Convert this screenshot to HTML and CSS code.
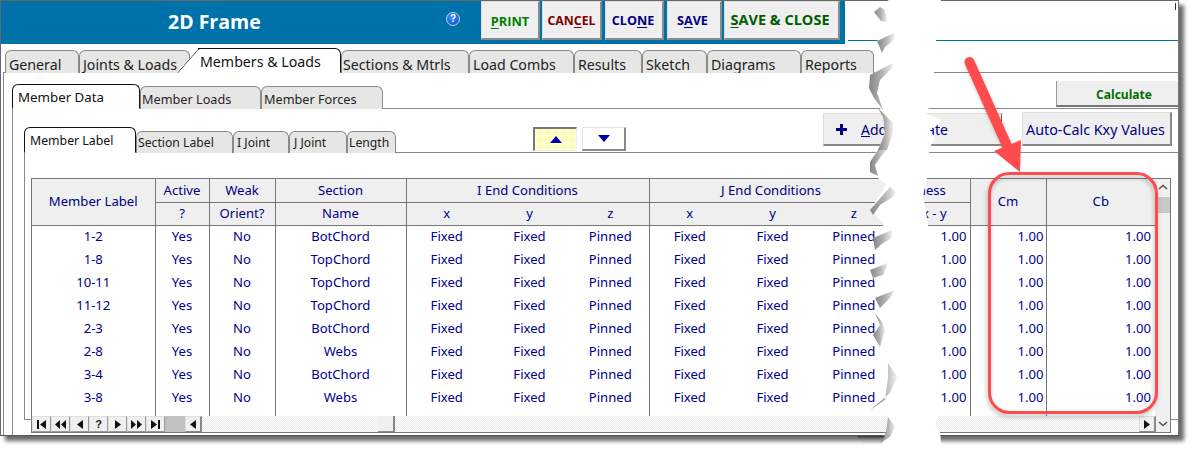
FILE: index.html
```html
<!DOCTYPE html>
<html lang="en">
<head>
<meta charset="utf-8">
<title>2D Frame</title>
<link rel="stylesheet" href="styles.css">
</head>
<body>
<div class="window">
  <header class="titlebar">
    <div class="bluebar">
      <h1 class="apptitle">2D Frame</h1>
      <span class="help">?</span>
      <div class="actions">
        <button class="act print"><u>P</u>RINT</button>
        <button class="act cancel">CAN<u>C</u>EL</button>
        <button class="act clone">CLO<u>N</u>E</button>
        <button class="act save">S<u>A</u>VE</button>
        <button class="act saveclose"><u>S</u>AVE &amp; CLOSE</button>
      </div>
    </div>
    <div class="titlerest"><span class="tick"></span></div>
  </header>

  <nav class="maintabs">
    <span class="tab m t-general">General</span>
    <span class="tab m t-joints">Joints &amp; Loads</span>
    <span class="tab m active t-members">Members &amp; Loads</span>
    <span class="tab m t-sections">Sections &amp; Mtrls</span>
    <span class="tab m t-combs">Load Combs</span>
    <span class="tab m t-results">Results</span>
    <span class="tab m t-sketch">Sketch</span>
    <span class="tab m t-diagrams">Diagrams</span>
    <span class="tab m t-reports">Reports</span>
  </nav>

  <section class="page1">
    <div class="subrow">
      <span class="tab s active t-mdata">Member Data</span>
      <span class="tab s t-mloads">Member Loads</span>
      <span class="tab s t-mforces">Member Forces</span>
      <button class="calc">Calculate</button>
    </div>

    <section class="page2">
      <div class="toolrow">
        <span class="tab k active t-mlabel">Member Label</span>
        <span class="tab k t-slabel">Section Label</span>
        <span class="tab k t-ijoint">I Joint</span>
        <span class="tab k t-jjoint">J Joint</span>
        <span class="tab k t-length">Length</span>
        <button class="sort up"><svg width="14" height="7" viewBox="0 0 14 7"><path d="M7 0L13 7H1Z" fill="#0000b0"/></svg></button>
        <button class="sort down"><svg width="14" height="7" viewBox="0 0 14 7"><path d="M1 0H13L7 7Z" fill="#0000b0"/></svg></button>
        <button class="tool add"><svg class="plus" width="11" height="11" viewBox="0 0 11 11"><path d="M4 0H7V4H11V7H7V11H4V7H0V4H4Z" fill="#000080"/></svg><span><u>A</u>dd / Update</span></button>
        <button class="tool auto">Auto-Calc Kxy Values</button>
      </div>

      <section class="page3">
        <div class="sheet">
          <div class="gridrow">
            <table class="grid">
              <colgroup>
                <col class="c1"><col class="c2"><col class="c3"><col class="c4">
                <col class="c5"><col class="c6"><col class="c7">
                <col class="c5"><col class="c6"><col class="c8">
                <col class="c9"><col class="c10"><col class="c11">
              </colgroup>
              <thead>
                <tr>
                  <th rowspan="2">Member Label</th><th>Active</th><th>Weak</th><th>Section</th>
                  <th colspan="3">I End Conditions</th><th colspan="3">J End Conditions</th>
                  <th class="kh1">Stiffness</th><th rowspan="2">Cm</th><th rowspan="2">Cb</th>
                </tr>
                <tr>
                  <th>?</th><th>Orient?</th><th>Name</th>
                  <th class="inner">x</th><th class="inner">y</th><th class="inner">z</th><th class="inner">x</th><th class="inner">y</th><th class="inner">z</th>
                  <th class="kh2">K x - y</th>
                </tr>
              </thead>
              <tbody>
                <tr><td class="e">1-2</td><td class="e">Yes</td><td class="e">No</td><td class="e">BotChord</td><td>Fixed</td><td>Fixed</td><td class="e">Pinned</td><td>Fixed</td><td>Fixed</td><td class="e">Pinned</td><td class="n e">1.00</td><td class="n e">1.00</td><td class="n">1.00</td></tr>
                <tr><td class="e">1-8</td><td class="e">Yes</td><td class="e">No</td><td class="e">TopChord</td><td>Fixed</td><td>Fixed</td><td class="e">Pinned</td><td>Fixed</td><td>Fixed</td><td class="e">Pinned</td><td class="n e">1.00</td><td class="n e">1.00</td><td class="n">1.00</td></tr>
                <tr><td class="e">10-11</td><td class="e">Yes</td><td class="e">No</td><td class="e">TopChord</td><td>Fixed</td><td>Fixed</td><td class="e">Pinned</td><td>Fixed</td><td>Fixed</td><td class="e">Pinned</td><td class="n e">1.00</td><td class="n e">1.00</td><td class="n">1.00</td></tr>
                <tr><td class="e">11-12</td><td class="e">Yes</td><td class="e">No</td><td class="e">TopChord</td><td>Fixed</td><td>Fixed</td><td class="e">Pinned</td><td>Fixed</td><td>Fixed</td><td class="e">Pinned</td><td class="n e">1.00</td><td class="n e">1.00</td><td class="n">1.00</td></tr>
                <tr><td class="e">2-3</td><td class="e">Yes</td><td class="e">No</td><td class="e">BotChord</td><td>Fixed</td><td>Fixed</td><td class="e">Pinned</td><td>Fixed</td><td>Fixed</td><td class="e">Pinned</td><td class="n e">1.00</td><td class="n e">1.00</td><td class="n">1.00</td></tr>
                <tr><td class="e">2-8</td><td class="e">Yes</td><td class="e">No</td><td class="e">Webs</td><td>Fixed</td><td>Fixed</td><td class="e">Pinned</td><td>Fixed</td><td>Fixed</td><td class="e">Pinned</td><td class="n e">1.00</td><td class="n e">1.00</td><td class="n">1.00</td></tr>
                <tr><td class="e">3-4</td><td class="e">Yes</td><td class="e">No</td><td class="e">BotChord</td><td>Fixed</td><td>Fixed</td><td class="e">Pinned</td><td>Fixed</td><td>Fixed</td><td class="e">Pinned</td><td class="n e">1.00</td><td class="n e">1.00</td><td class="n">1.00</td></tr>
                <tr><td class="e">3-8</td><td class="e">Yes</td><td class="e">No</td><td class="e">Webs</td><td>Fixed</td><td>Fixed</td><td class="e">Pinned</td><td>Fixed</td><td>Fixed</td><td class="e">Pinned</td><td class="n e">1.00</td><td class="n e">1.00</td><td class="n">1.00</td></tr>
                <tr class="filler"><td class="e"></td><td class="e"></td><td class="e"></td><td class="e"></td><td></td><td></td><td class="e"></td><td></td><td></td><td class="e"></td><td class="e"></td><td class="e"></td><td></td></tr>
              </tbody>
            </table>
            <div class="vscroll">
              <svg class="chev" width="10" height="6" viewBox="0 0 10 6"><path d="M1 5L5 1.5L9 5" fill="none" stroke="#555" stroke-width="1.6"/></svg>
              <span class="vthumb"></span>
            </div>
          </div>
          <div class="navbar">
            <button class="nb"><svg width="11" height="9" viewBox="0 0 11 9"><path d="M1 0H3V9H1ZM10 0V9L4 4.5Z" fill="#111"/></svg></button>
            <button class="nb"><svg width="11" height="9" viewBox="0 0 11 9"><path d="M5 0V9L0 4.5ZM11 0V9L6 4.5Z" fill="#111"/></svg></button>
            <button class="nb"><svg width="6" height="9" viewBox="0 0 6 9"><path d="M6 0V9L0 4.5Z" fill="#111"/></svg></button>
            <button class="nb qm">?</button>
            <button class="nb"><svg width="6" height="9" viewBox="0 0 6 9"><path d="M0 0V9L6 4.5Z" fill="#111"/></svg></button>
            <button class="nb"><svg width="11" height="9" viewBox="0 0 11 9"><path d="M0 0V9L5 4.5ZM6 0V9L11 4.5Z" fill="#111"/></svg></button>
            <button class="nb"><svg width="11" height="9" viewBox="0 0 11 9"><path d="M1 0V9L7 4.5ZM8 0H10V9H8Z" fill="#111"/></svg></button>
            <span class="navgap"></span>
            <button class="hb"><svg width="6" height="9" viewBox="0 0 6 9"><path d="M6 0V9L0 4.5Z" fill="#111"/></svg></button>
            <div class="track"><span class="hthumb"></span></div>
            <button class="hb"><svg width="6" height="9" viewBox="0 0 6 9"><path d="M0 0V9L6 4.5Z" fill="#111"/></svg></button>
            <div class="corner"><svg width="10" height="6" viewBox="0 0 10 6"><path d="M1 1L5 4.5L9 1" fill="none" stroke="#555" stroke-width="1.6"/></svg></div>
          </div>
        </div>
      </section>
    </section>
  </section>
</div>

<svg class="overlay" width="1193" height="451" viewBox="0 0 1193 451" aria-hidden="true">
  <defs>
    <linearGradient id="tearshade" x1="0" x2="1" y1="0" y2="0">
      <stop offset="0" stop-color="#858585"/>
      <stop offset="0.55" stop-color="#b4b4b4"/>
      <stop offset="1" stop-color="#f0f0f0"/>
    </linearGradient>
    <linearGradient id="botshade" x1="0" x2="0" y1="0" y2="1">
      <stop offset="0" stop-color="#333"/>
      <stop offset="1" stop-color="#ddd"/>
    </linearGradient>
    <filter id="soft" x="-20%" y="-20%" width="140%" height="140%"><feGaussianBlur stdDeviation="2"/></filter>
  </defs>
  <polygon fill="#fff" points="889,0 880,6 874,12 878,20 884,24 889,30 877,41 882,53 886,56 892,62 870,75 869,88 878,100 880,108 887,117 884,135 878,150 870,162 870,172 878,178 886,184 878,198 870,210 884,224 876,238 875,250 880,258 872,270 873,278 880,290 875,298 880,308 875,313 880,325 873,335 880,347 888,363 886,385 870,410 888,415 893,427 885,437 880,451 942,451 940,432 935,425 938,415 928,400 928,224 923,195 927,178 929,152 931,145 935,138 930,130 942,120 925,113 929,108 934,72 936,45 936,30 941,0"/>
  <g fill="url(#tearshade)">
    <polygon points="874,12 880,7 885,10 887,22 881,21"/>
    <polygon points="877,41 894,33 894,40 885,47 882,53"/>
    <polygon points="870,75 893,63 892,68 880,80 877,93 883,110 874,98 869,88"/>
    <polygon points="878,108 887,117 893,123 893,133 887,150 878,150 885,133 883,117"/>
    <polygon points="878,150 887,150 882,155 875,165 878,176 870,172 870,162"/>
    <polygon points="870,210 890,187 896,192 893,197 880,205 873,215"/>
    <polygon points="873,238 892,230 892,238 883,243 875,250"/>
    <polygon points="870,270 888,263 883,275 873,278"/>
    <polygon points="875,298 895,290 890,298 880,308"/>
    <polygon points="875,313 882,322 885,330 880,347 873,335 880,325"/>
    <polygon points="888,363 897,377 890,393 870,410 885,400 888,378"/>
    <polygon points="888,417 895,427 890,437 880,443 886,432"/>
  </g>
  <polygon fill="url(#botshade)" points="857,436 885,436 880,443 862,443"/>

  <g class="callout">
    <g opacity=".4" filter="url(#soft)" transform="translate(-1 3)">
      <rect x="989.5" y="173.5" width="167" height="239" rx="20" fill="none" stroke="#555" stroke-width="3"/>
      <path d="M970 59L1010 148" stroke="#555" stroke-width="9" fill="none"/>
    </g>
    <rect x="989.5" y="173.5" width="167" height="239" rx="20" fill="none" stroke="#ff4a4e" stroke-width="3"/>
    <path d="M969.5 62L1008 148" stroke="#ff4a4e" stroke-width="10" stroke-linecap="round" fill="none"/>
    <polygon fill="#ff4a4e" points="994,151 1021,140 1020,172"/>
  </g>
</svg>
</body>
</html>
```
FILE: styles.css
```css
* { box-sizing: border-box; }
html, body { margin: 0; padding: 0; background: #fff; }
body { width: 1193px; height: 451px; overflow: hidden; position: relative; font-family: "Noto Sans", "Open Sans", sans-serif; color: #000080; }
button { font-family: inherit; margin: 0; padding: 0; cursor: default; }

.window {
  width: 1179px; height: 436px;
  border-top: 1px solid #666; border-left: 1px solid #667; border-right: 1px solid #777; border-bottom: 1px solid #555;
  box-shadow: 5px 5px 4px #6a6a6a;
  background: #fff;
}

/* title */
.titlebar { display: flex; height: 43px; }
.bluebar { width: 844px; height: 43px; background: #0072aa; display: flex; align-items: flex-start; position: relative; }
.apptitle { margin: 8px 0 0 167px; width: 278px; font: 700 19.5px/26px "Open Sans", sans-serif; color: #fff; }
.help { margin: 11px 0 0 0; width: 14px; height: 14px; border-radius: 50%; background: radial-gradient(circle at 40% 35%, #3d8df5, #0a50c8); border: 1px solid #bcd6f5; color: #fff; font: 700 10px/12px "Liberation Sans", sans-serif; text-align: center; }
.actions { display: flex; gap: 2px; margin-left: 21px; }
.act { height: 39px; background: #efefef; border: 1px solid #ddd; border-right: 2px solid #8a8a8a; border-bottom: 2px solid #8a8a8a; padding-top: 2px; font: 700 13px/20px "Open Sans", sans-serif; }
.act u { text-underline-offset: 2px; }
.print { width: 59px; color: #008000; font-size: 12.8px; }
.cancel { width: 60px; color: #800000; margin-right: 1px; font-size: 12.3px; }
.clone { width: 59px; color: #000080; margin-right: 1px; font-size: 12.6px; padding-right: 2px; }
.save { width: 55px; color: #000080; font-size: 12.6px; padding-right: 3px; }
.saveclose { width: 116px; color: #005c00; font-size: 14.5px; padding: 0 3px 0 0; }
.titlerest { flex: 1; height: 40px; margin-left: 3px; border-bottom: 1px solid #0072aa; position: relative; display: flex; justify-content: flex-end; padding: 2px 2px 0 0; }
.tick { display: block; width: 1px; height: 7px; background: #333; }

/* tabs */
.tab { display: block; background: #e6e6e5; border: 1px solid #8a8a8a; border-bottom: 0; border-radius: 6px 6px 0 0; white-space: nowrap; color: #222; overflow: hidden; }
.tab.active { background: #fff; border-color: #111; color: #111; overflow: visible; position: relative; z-index: 1; }

.maintabs { display: flex; align-items: flex-end; height: 29px; margin-left: 2px; padding-left: 2px; border-bottom: 1px solid #8a8a8a; }
.tab.m { height: 23px; margin-bottom: -1px; font-size: 14.2px; line-height: 27px; padding-left: 3px; }
.t-general { width: 74px; }
.t-joints { width: 111px; }
.tab.m.t-members { width: 143px; height: 25px; padding-left: 2px; margin-left: 8px; line-height: 25px; border-left: 0; border-radius: 0 6px 0 0; border-bottom: 1px solid #fff; }
.t-members::before { content: ""; position: absolute; left: -21px; top: -1px; bottom: -1px; width: 25px; background: #fff; border-left: 1px solid #111; border-top: 1px solid #111; border-radius: 3px 0 0 0; transform: skewX(-41deg); transform-origin: bottom left; z-index: -1; }
.t-sections { width: 128px; padding-left: 1px !important; }
.t-combs { width: 105px; }
.t-results { width: 68px; }
.t-sketch { width: 65px; }
.t-diagrams { width: 94px; }
.t-reports { width: 73px; }

.page1 { margin-left: 2px; border-left: 1px solid #8a8a8a; height: 362px; }
.subrow { display: flex; align-items: flex-end; height: 36px; margin-left: 8px; border-bottom: 1px solid #8a8a8a; }
.tab.s { height: 23px; margin-bottom: -1px; font-size: 12.7px; line-height: 25px; padding-left: 1px; }
.tab.s.active { height: 25px; padding-left: 5px; font-size: 13.3px; line-height: 25px; border-bottom: 1px solid #fff; border-left-color: #111; }
.t-mdata { width: 128px; }
.t-mloads { width: 121px; color: #30202a; }
.t-mforces { width: 122px; padding-left: 2px !important; }
.calc { margin-left: auto; margin-bottom: 1px; width: 122px; height: 26px; background: #efefef; border: 0; border-left: 1px solid #999; border-bottom: 2px solid #777; color: #007000; font: 700 12px/20px "Open Sans", sans-serif; padding: 3px 0 0 13px; }

.page2 { margin-left: 8px; border-left: 1px solid #8a8a8a; height: 326px; }
.toolrow { display: flex; align-items: flex-end; height: 44px; margin-left: 11px; border-bottom: 1px solid #8a8a8a; }
.tab.k { height: 22px; margin-bottom: -1px; font-size: 12.2px; line-height: 22px; padding-left: 1px; }
.tab.k.active { height: 26px; padding-left: 5px; font-size: 12.3px; line-height: 26px; border-bottom: 1px solid #fff; }
.t-mlabel { width: 112px; }
.t-slabel { width: 97px; }
.tab.k.t-ijoint { width: 56px; padding-left: 3px; }
.tab.k.t-jjoint { width: 58px; padding-left: 4px; }
.t-length { width: 49px; }

.sort { width: 44px; height: 24px; margin-bottom: 1px; display: flex; align-items: center; justify-content: center; }
.up { margin-left: 137px; border: 1px solid #eee; border-top: 2px solid #777; border-left: 2px solid #777; background: repeating-conic-gradient(#ffff90 0 25%, #fff 0 50%) 0 0/2px 2px; }
.down { margin-left: 5px; border: 1px solid #e4e4e4; border-right: 2px solid #888; border-bottom: 2px solid #888; background: #fff; }

.tool { background: #efefef; border: 1px solid #ddd; color: #000080; font-size: 14px; line-height: 20px; padding-top: 1px; }
.add { width: 179px; height: 33px; margin: 0 0 6px 197px; border-right: 1px solid #666; border-bottom: 2px solid #888; display: flex; align-items: center; justify-content: flex-start; padding-left: 12px; gap: 14px; }
.auto { width: 150px; height: 34px; margin: 0 0 6px 20px; border-right: 2px solid #888; border-bottom: 2px solid #888; font-size: 14.3px; padding: 2px 2px 0 0; }
.plus { flex: none; }

.page3 { margin-left: 11px; border-left: 1px solid #8a8a8a; border-bottom: 1px solid #8a8a8a; height: 267px; padding: 25px 0 0 6px; }
.sheet { width: 1140px; border: 1px solid #777; border-width: 1px 1px 0 1px; }
.gridrow { display: flex; height: 237px; }
.grid { table-layout: fixed; width: 1123px; height: 237px; border-collapse: collapse; flex: none; }
.c1 { width: 123px; } .c2 { width: 54px; } .c3 { width: 66px; } .c4 { width: 131px; }
.c5 { width: 81px; } .c6 { width: 85px; } .c7 { width: 77px; } .c8 { width: 78px; }
.c9 { width: 77px; } .c10 { width: 76px; } .c11 { width: 109px; }
.grid th { height: 23px; padding: 0 0 1px; background: #efefef; border: 1px solid #777; border-top: 0; font: 400 13.1px/16px "Noto Sans", sans-serif; color: #000080; overflow: hidden; white-space: nowrap; }
.grid th:first-child { border-left: 0; }
.grid th:last-child { border-right: 0; }
.grid thead tr:last-child th:last-child { border-right: 1px solid #777; }
.grid th.inner { border-left: 0; border-right: 0; }
.grid th.inner:nth-child(6), .grid th.inner:nth-child(9) { border-right: 1px solid #777; }
.grid th.kh1 { text-align: right; padding-right: 34px; }
.grid th.kh2 { text-align: left; padding-left: 17px; }
.grid td { height: 23px; padding: 0 0 2px; font: 400 13.1px/16px "Noto Sans", sans-serif; color: #000090; text-align: center; white-space: nowrap; }
.grid td.e { border-right: 1px solid #777; }
.grid td.n { text-align: right; padding-right: 3px; }
.grid td.n.e + td.n.e { padding-right: 2px; }
.grid td.n:last-child { padding-right: 4px; }
.grid .filler td { height: 7px; padding: 0; }

.vscroll { flex: 1; background: #f0f0f0; display: flex; flex-direction: column; align-items: center; padding-top: 5px; }
.chev { flex: none; }
.vthumb { display: block; width: 100%; height: 16px; margin-top: 7px; background: #c9c9c9; }

.navbar { display: flex; height: 17px; border-bottom: 1px solid #777; background: #f0f0f0; }
.nb { width: 19px; height: 16px; background: #efefef; border: 1px solid #e0e0e0; border-right: 1px solid #999; border-bottom: 1px solid #999; display: flex; align-items: center; justify-content: center; }
.qm { font: 700 11px/14px "Liberation Sans", sans-serif; color: #222; }
.navgap { width: 20px; background: #c0c0c0; }
.hb { flex: none; width: 17px; height: 16px; background: #efefef; border: 1px solid #e0e0e0; border-right: 2px solid #888; border-bottom: 1px solid #888; display: flex; align-items: center; justify-content: center; }
.track { width: 937px; height: 16px; background: repeating-conic-gradient(#e9e9e9 0 25%, #fff 0 50%) 0 0/2px 2px; padding-left: 176px; }
.hthumb { display: block; width: 17px; height: 16px; background: #efefef; border-right: 2px solid #888; border-bottom: 1px solid #888; }
.corner { flex: 1; display: flex; align-items: center; justify-content: center; }

.overlay { position: absolute; left: 0; top: 0; pointer-events: none; }
```
